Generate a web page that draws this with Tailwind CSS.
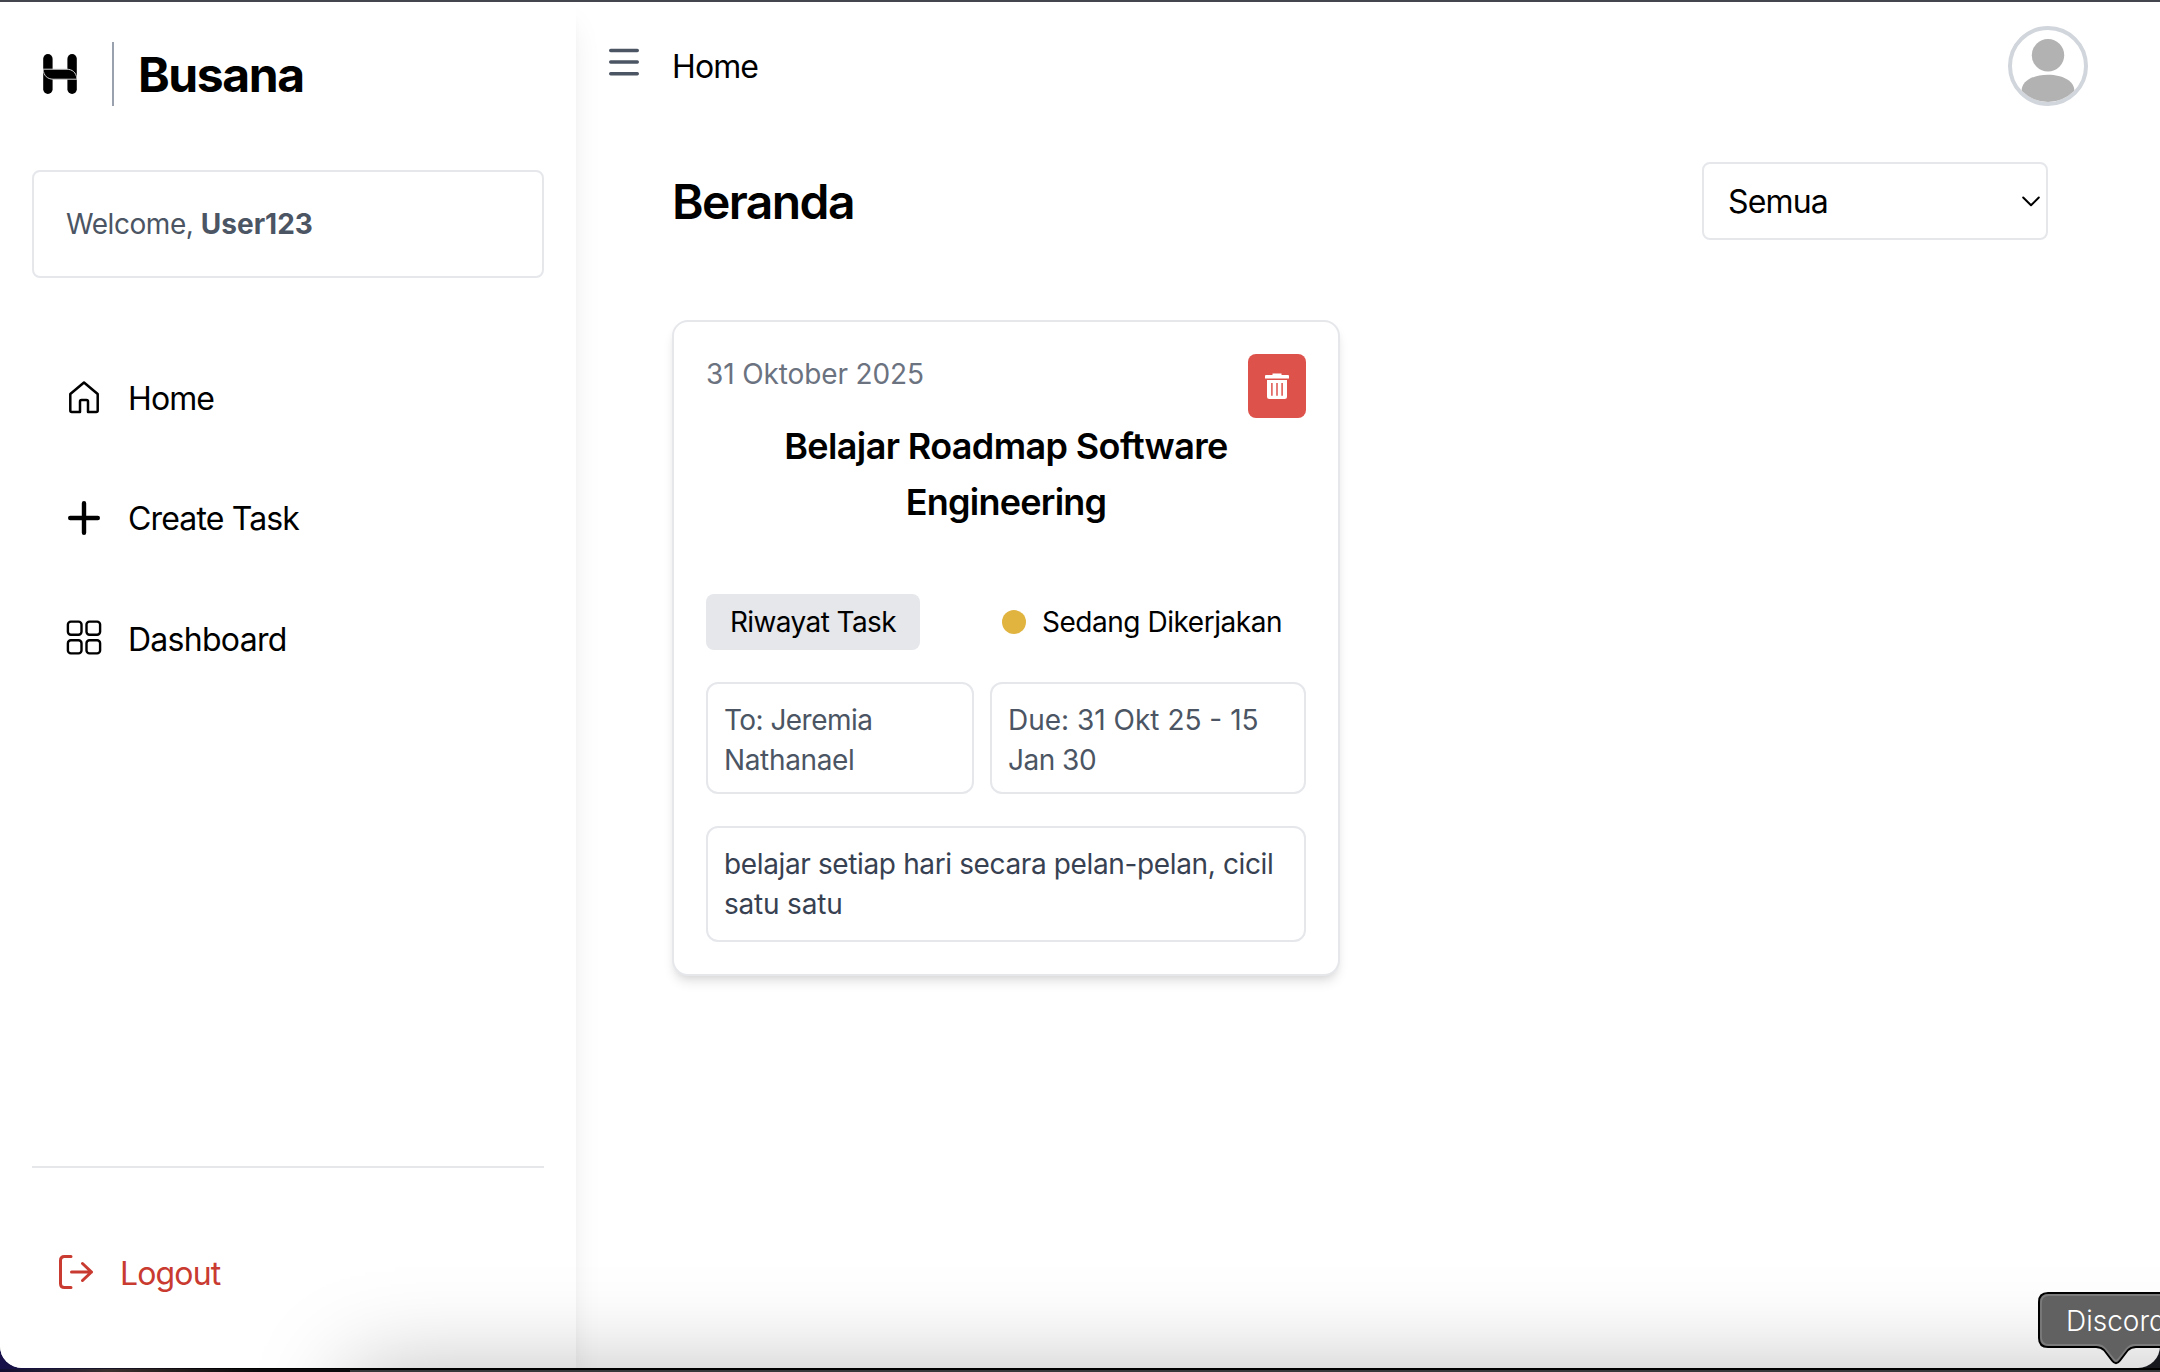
<!DOCTYPE html>
<html lang="id">
<head>
<meta charset="utf-8">
<title>Busana</title>
<script src="https://cdn.jsdelivr.net/npm/@tailwindcss/browser@4"></script>
</head>
<body class="relative h-[1372px] w-[2160px] overflow-hidden bg-black font-['Inter',sans-serif] text-black">

<!-- Browser window -->
<div class="relative z-10 flex h-[1368px] w-full overflow-hidden rounded-b-[22px] border-t-2 border-[#44464e] bg-white">

  <!-- Sidebar -->
  <aside class="relative flex h-full w-[576px] shrink-0 flex-col bg-white px-8 pt-10 shadow-[0_20px_30px_-6px_rgba(0,0,0,0.1),0_8px_12px_-8px_rgba(0,0,0,0.1)]">
    <div class="flex h-16 items-center">
      <svg class="ml-[11px] h-10 w-[34px]" viewBox="0 0 34 40">
        <rect x="0.2" y="0" width="9.4" height="40" rx="4.7"/>
        <rect x="24.4" y="0" width="9.4" height="40" rx="4.7"/>
        <path d="M0 15.2H24C29 15.4 33.2 18 34 25.2H10C4.500 25 0.800 22 0 15.200Z" stroke="#d4d4d4" stroke-width="1"/>
      </svg>
      <div class="ml-[35px] h-16 w-0.5 bg-gray-400"></div>
      <h1 class="ml-6 pt-0.5 text-5xl font-bold tracking-[-1.4px]">Busana</h1>
    </div>

    <div class="mt-16 flex h-[108px] items-center rounded-lg border-2 border-gray-200 px-8 text-[28px] text-[#4b5563]">
      <span class="whitespace-pre tracking-[-0.45px]">Welcome, </span><span class="font-bold">User123</span>
    </div>

    <nav class="mt-[81px] flex flex-col gap-[40px] text-[32px]">
      <a class="flex h-20 items-center gap-[26px] pl-8">
        <svg class="-mt-1 size-[38px]" viewBox="0 0 38 38" fill="none" stroke="currentColor" stroke-width="2.5" stroke-linejoin="round"><path d="M20 4.500L33.700 16V32.500Q33.700 34 32.200 34H24V23.500Q24 22 22.500 22H17.500Q16 22 16 23.500V34H7.800Q6.300 34 6.300 32.500V16Z"/></svg>
        <span class="tracking-[-0.9px]">Home</span>
      </a>
      <a class="flex h-20 items-center gap-[26px] pl-8">
        <svg class="-mt-0.5 size-[38px]" viewBox="0 0 38 38" fill="none" stroke="currentColor" stroke-width="4.400" stroke-linecap="round"><path d="M20 5.200V34.800M6.200 20H33.800" transform="translate(0 -1)"/></svg>
        <span class="tracking-[-0.85px]">Create Task</span>
      </a>
      <a class="flex h-20 items-center gap-[26px] pl-8">
        <svg class="-mt-0.5 size-[38px]" viewBox="0 0 38 38" fill="none" stroke="currentColor" stroke-width="2.400"><rect x="3.900" y="2.600" width="13.600" height="13.200" rx="3"/><rect x="22.500" y="2.600" width="13.600" height="13.200" rx="3"/><rect x="3.900" y="21.200" width="13.600" height="13.200" rx="3"/><rect x="22.500" y="21.200" width="13.600" height="13.200" rx="3"/></svg>
        <span class="pt-px tracking-[-0.72px]">Dashboard</span>
      </a>
    </nav>

    <div class="mt-auto h-[202px] border-t-2 border-gray-200 pt-[85px]">
      <a class="flex h-10 items-center gap-6 pl-6 text-[32px] text-[#c93a30]">
        <svg class="-mt-0.5 h-10 w-[40px]" viewBox="0 0 40 40" fill="none" stroke="currentColor" stroke-width="3" stroke-linecap="round" stroke-linejoin="round"><path d="M15 4.500H8.500Q4.500 4.500 4.500 8.500V31.500Q4.500 35.500 8.500 35.500H15M15.500 20H35.500M26.500 11.500L35.500 20L26.500 28.500"/></svg>
        <span class="pt-px tracking-[-0.86px]">Logout</span>
      </a>
    </div>
  </aside>

  <!-- Content -->
  <main class="flex grow flex-col pr-[112px]">
    <header class="flex h-[104px] items-start pl-8 -mr-10">
      <svg class="mt-10 size-10" viewBox="0 0 40 40" fill="none" stroke="#4b5563" stroke-width="3.400" stroke-linecap="round"><path d="M2.700 8.500H29.300M2.700 20H29.300M2.700 31.700H29.300"/></svg>
      <span class="ml-6 mt-[41px] text-[32px] leading-[48px] tracking-[-0.9px]">Home</span>
      <svg class="ml-auto mt-6 size-20 rounded-full border-4 border-gray-300" viewBox="4 4 72 72" fill="#b2b2b2"><circle cx="40" cy="29.300" r="16.200"/><path d="M13.600 65C13.600 55 25 48.700 40 48.700S66.400 55 66.400 65V80H13.600Z"/></svg>
    </header>

    <div class="mt-[56px] flex h-[78px] items-center justify-between pl-24">
      <h2 class="pt-0.5 text-5xl font-semibold tracking-[-1.6px]">Beranda</h2>
      <div class="flex h-[78px] w-[346px] items-center justify-between rounded-lg border-2 border-gray-200 pl-6 pr-[5px] text-[32px]">
        <span class="pt-0.5 tracking-[-0.85px]">Semua</span>
        <svg class="h-5 w-[20px]" viewBox="0 0 20 20" fill="none" stroke="currentColor" stroke-width="2" stroke-linecap="round" stroke-linejoin="round"><path d="M2.200 6.500L10 14.300L17.800 6.500"/></svg>
      </div>
    </div>

    <div class="pl-24 pt-20">
      <article class="flex h-[656px] w-[668px] flex-col rounded-2xl border-2 border-gray-200 bg-white p-8 shadow-[0_8px_12px_-2px_rgba(0,0,0,0.1),0_4px_8px_-4px_rgba(0,0,0,0.1)]">
        <div class="flex h-16 justify-between">
          <span class="text-[28px] leading-10 tracking-[-0.12px] text-[#6b7280]">31 Oktober 2025</span>
          <button class="flex h-16 w-[58px] items-center justify-center rounded-lg bg-[#de524c]">
            <svg class="h-[26px] w-6" viewBox="0 0 24 26"><path fill="#fff" d="M7.500 0.500H16.500V2H23Q24 2 24 3V5.500H0V3Q0 2 1 2H7.500ZM2 7H22V23.500Q22 26 19.500 26H4.500Q2 26 2 23.500Z"/><path stroke="#de524c" stroke-width="1.500" d="M6.900 10V22.800M12 10V22.800M17.100 10V22.800"/></svg>
          </button>
        </div>
        <h3 class="text-center text-4xl leading-[56px] font-semibold tracking-[-0.63px]">Belajar Roadmap Software<br><span class="tracking-[-0.75px]">Engineering</span></h3>
        <div class="mt-16 flex h-14 items-center justify-between pr-6 text-[28px]">
          <span class="flex h-14 w-[214px] items-center justify-center rounded-lg bg-gray-200 tracking-[-0.6px]">Riwayat Task</span>
          <span class="flex items-center gap-4"><i class="size-6 rounded-full bg-[#e1b440]"></i><span class="tracking-[-0.46px]">Sedang Dikerjakan</span></span>
        </div>
        <div class="mt-8 flex h-28 gap-4 text-[28px] leading-10 text-[#4b5563]">
          <div class="w-[268px] rounded-xl border-2 border-gray-200 px-4 pt-4"><span class="tracking-[-0.55px]">To: Jeremia</span><br><span class="tracking-[-0.35px]">Nathanael</span></div>
          <div class="grow rounded-xl border-2 border-gray-200 px-4 pt-4">Due: 31 Okt 25 - 15<br><span class="tracking-[-0.5px]">Jan 30</span></div>
        </div>
        <div class="mt-8 rounded-xl border-2 border-gray-200 p-4 text-[28px] leading-10 whitespace-nowrap text-[#374151]"><span class="tracking-[-0.37px]">belajar setiap hari secara pelan-pelan, cicil</span><br><span class="tracking-[-0.2px]">satu satu</span></div>
      </article>
    </div>
  </main>

  <!-- Shadow cast by the dock onto the window -->
  <div class="absolute top-[1368px] left-[350px] h-[300px] w-[2200px] shadow-[0_0_90px_rgba(0,0,0,0.26)]"></div>
</div>

<!-- Desktop and dock edge below the window -->
<div class="absolute bottom-0 left-0 h-[22px] w-[300px] bg-linear-to-r from-[#17104a] via-[#17121a] to-black"></div>
<div class="absolute right-0 bottom-0 h-6 w-10 bg-[#17181d]"></div>
<div class="absolute bottom-0 left-0 z-10 h-[3px] w-full bg-linear-to-r from-[#120d33] via-[#3a302e] via-5% to-[#0c0a0c] to-12%"></div>
<div class="absolute bottom-0 left-[350px] z-10 h-1 w-[1810px] border-t-2 border-black bg-[#38383a]"></div>

<!-- Dock tooltip, running past the right edge of the screen -->
<div class="absolute top-[1292px] left-[2038px] z-20">
  <svg class="absolute top-0 left-0 h-20 w-[140px]" viewBox="0 0 140 80"><path d="M150 1H10Q1 1 1 10V46Q1 55 10 55H58Q63 55 66 58L74 68.500Q78 74 82 68.500L90 58Q93 55 98 55H150Z" fill="#616161" stroke="#000" stroke-width="2"/><path d="M150 3H11Q3 3 3 11V45Q3 53 11 53H59Q64 53 67.500 57L75.500 67Q78 70.500 80.500 67L88.500 57Q92 53 97 53H150" fill="none" stroke="#7b7b7b" stroke-width="1.800"/></svg>
  <span class="relative block w-[122px] overflow-hidden pl-7 pt-px text-[28px] leading-[56px] font-light text-white">Discord</span>
</div>
</body>
</html>
